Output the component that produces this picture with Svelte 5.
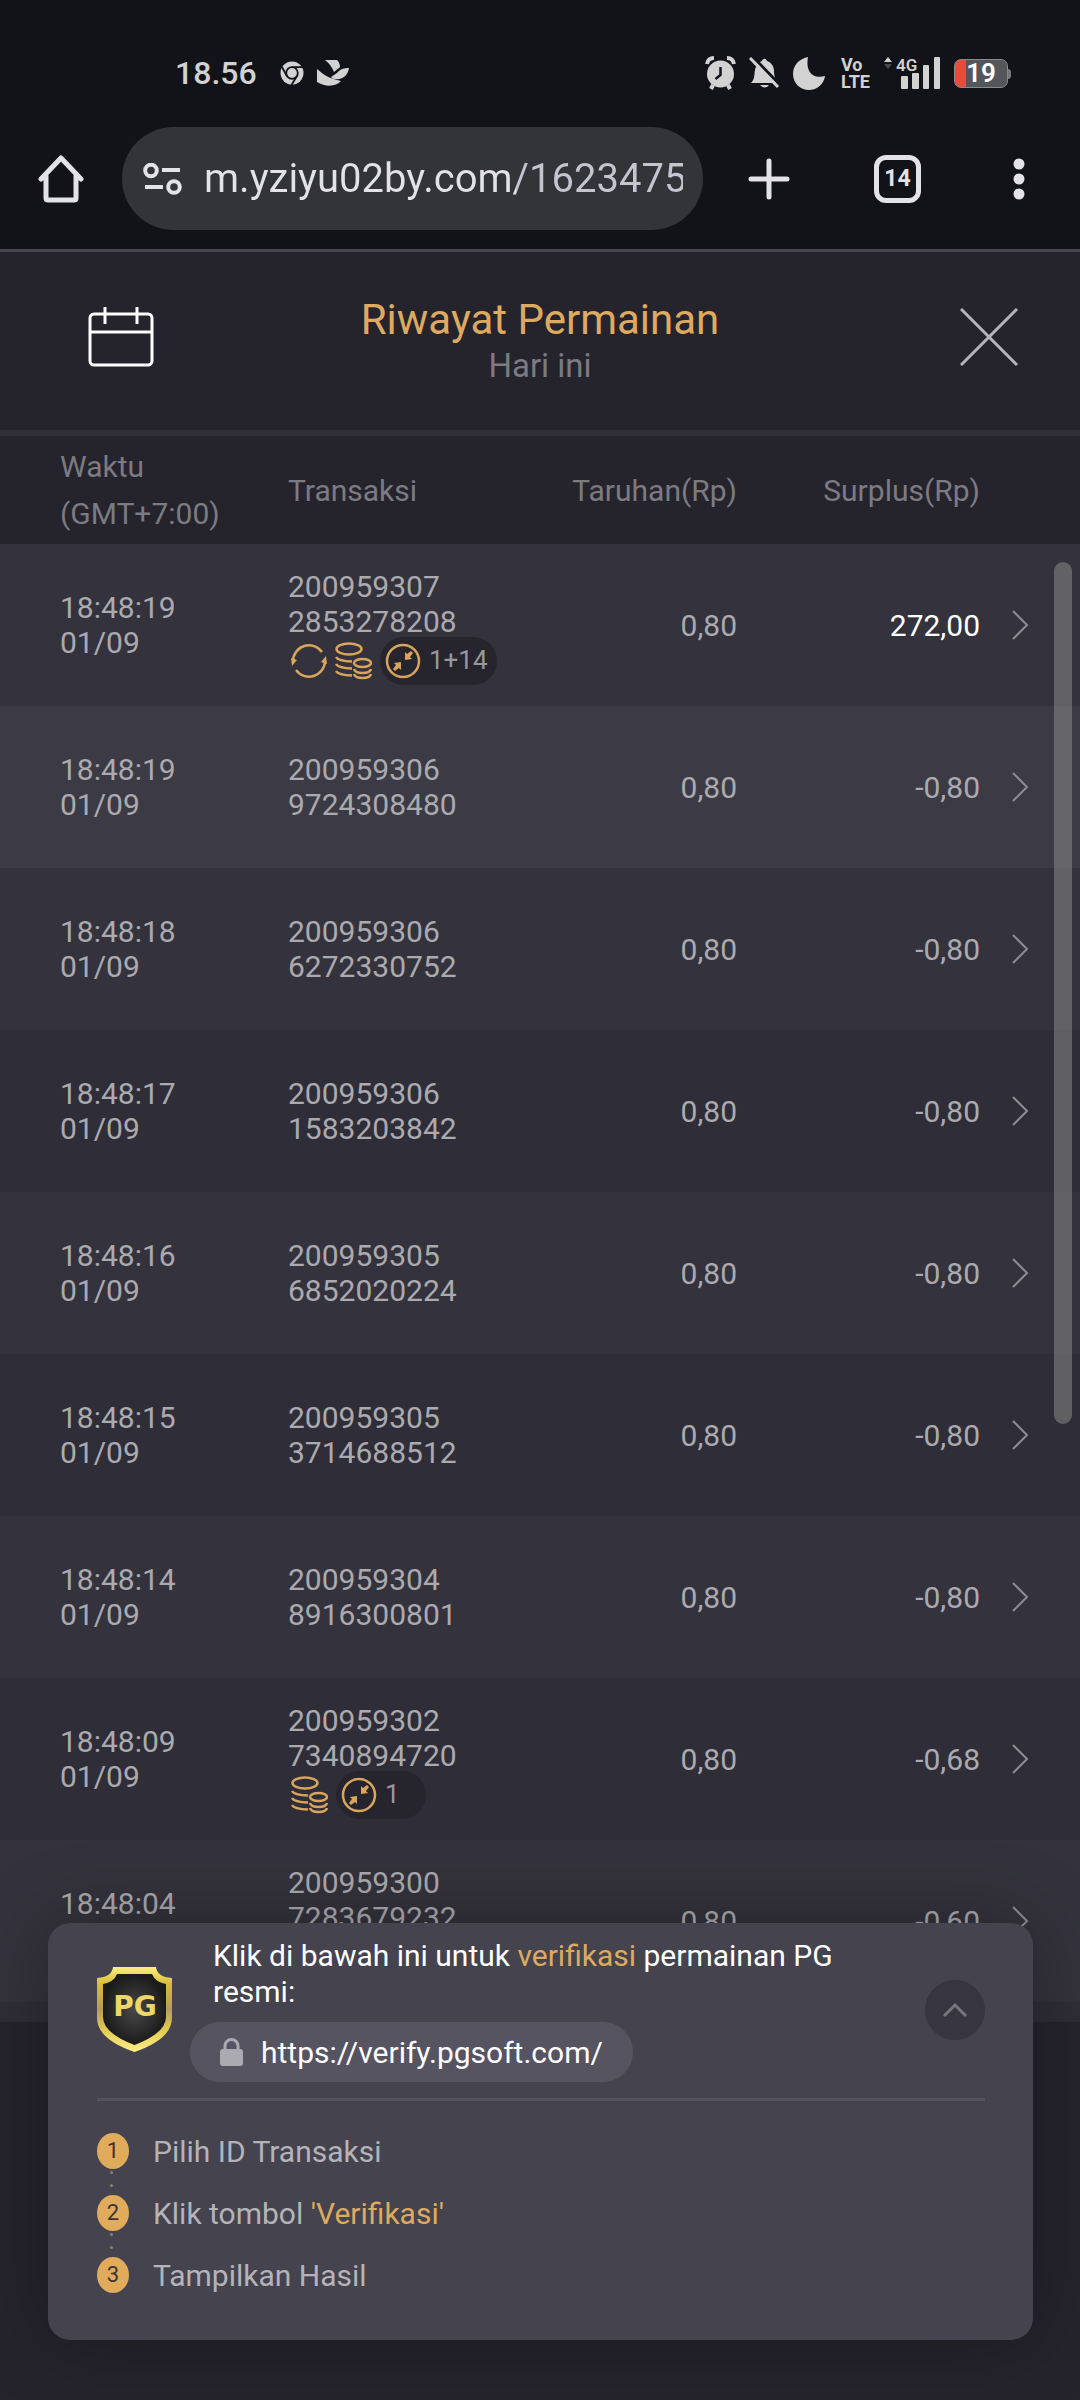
<script lang="ts">
  type Row = {
    time: string;
    date: string;
    id: [string, string];
    bet: string;
    profit: string;
    win?: boolean;
    respin?: boolean;
    coins?: boolean;
    rounds?: string;
  };

  const rows: Row[] = [
    { time: "18:48:19", date: "01/09", id: ["200959307", "2853278208"], bet: "0,80", profit: "272,00", win: true, respin: true, coins: true, rounds: "1+14" },
    { time: "18:48:19", date: "01/09", id: ["200959306", "9724308480"], bet: "0,80", profit: "-0,80" },
    { time: "18:48:18", date: "01/09", id: ["200959306", "6272330752"], bet: "0,80", profit: "-0,80" },
    { time: "18:48:17", date: "01/09", id: ["200959306", "1583203842"], bet: "0,80", profit: "-0,80" },
    { time: "18:48:16", date: "01/09", id: ["200959305", "6852020224"], bet: "0,80", profit: "-0,80" },
    { time: "18:48:15", date: "01/09", id: ["200959305", "3714688512"], bet: "0,80", profit: "-0,80" },
    { time: "18:48:14", date: "01/09", id: ["200959304", "8916300801"], bet: "0,80", profit: "-0,80" },
    { time: "18:48:09", date: "01/09", id: ["200959302", "7340894720"], bet: "0,80", profit: "-0,68", coins: true, rounds: "1" },
    { time: "18:48:04", date: "01/09", id: ["200959300", "7283679232"], bet: "0,80", profit: "-0,60", coins: true },
  ];

  let active = $state(1);
  let open = $state(true);
  let url = $state("m.yziyu02by.com/1623475");
</script>

<div class="screen">
  <div class="status">
    <span class="clock">18.56</span>
    <svg class="chrome" width="24" height="24" viewBox="0 0 24 24">
      <circle cx="12" cy="12" r="11.5" fill="#d2d2d2" />
      <circle cx="12" cy="12" r="5.8" fill="none" stroke="#121318" stroke-width="1.8" />
      <path d="M12 6.2H23M7 15 1.6 5.5M17 15l-5.5 9" stroke="#121318" stroke-width="1.8" />
    </svg>
    <svg width="32" height="26" viewBox="0 0 32 26" fill="#d2d2d2">
      <path d="M8 0h12c2 2 3 4 3 7l-6 5C15 7 12 3 8 0z" />
      <path d="M0 9c6 5 10 9 24 12-5 6-16 6-24 1z" />
      <path d="M32 8c-1 7-6 12-14 11-2 0-3-1-4-2l6-4c3-4 7-5 12-5z" />
    </svg>
    <div class="indicators">
      <svg width="31" height="34" viewBox="0 0 31 34">
        <circle cx="15.500" cy="18" r="13.500" fill="#d2d2d2" />
        <path d="M2 8Q3 2 9 2M29 8Q28 2 22 2M8 29l-2 4M23 29l2 4" fill="none" stroke="#d2d2d2" stroke-width="4" />
        <path d="M15.500 11v8l-5 4" fill="none" stroke="#121318" stroke-width="2.500" />
      </svg>
      <svg width="31" height="32" viewBox="0 0 31 32">
        <path d="M2 26c4-4 3-8 4-13 1-5 4-8 7-9 1-3 4-3 5 0 5 2 7 6 7 10 0 5 1 8 4 12zM11 28h9q-4 5-9 0z" fill="#d2d2d2" />
        <path d="M4 0l28 29" stroke="#121318" stroke-width="3" />
        <path d="M1 1l28 29" stroke="#d2d2d2" stroke-width="3" />
      </svg>
      <svg width="32" height="33" viewBox="0 0 32 33">
        <path d="M15 0C5 2 0 9 0 17c0 9 7 16 16 16 8 0 15-6 16-14C22 22 12 17 15 0z" fill="#d2d2d2" />
      </svg>
      <span class="volte">Vo<br />LTE</span>
      <svg class="signal" width="58" height="34" viewBox="0 0 58 34">
        <path d="M1 6l4-5 4 5z" fill="#d2d2d2" />
        <path d="M1 8l4 5 4-5z" fill="#48494d" />
        <text x="13" y="15">4G</text>
        <g fill="#d2d2d2">
          <rect x="18" y="20" width="7" height="13" rx="1" />
          <rect x="29" y="17" width="7" height="16" rx="1" />
          <rect x="40" y="9" width="6" height="24" rx="1" />
          <rect x="51" y="1" width="6" height="32" rx="1" />
        </g>
      </svg>
      <span class="battery">19</span>
    </div>
  </div>

  <nav class="toolbar">
    <button aria-label="Home">
      <svg width="46" height="48" viewBox="0 0 46 48" fill="none" stroke="#e3e2e9" stroke-width="5" stroke-linejoin="round" stroke-linecap="round">
        <path d="M3 24 23 3l20 21M8 21v22q0 2 2 2h26q2 0 2-2V21" />
      </svg>
    </button>
    <div class="address">
      <svg width="39" height="32" viewBox="0 0 39 32" fill="none" stroke="#e3e2e9" stroke-width="4">
        <circle cx="8" cy="7.500" r="5.800" />
        <path d="M19 7h18M2 24h18" />
        <circle cx="31" cy="24" r="5.800" />
      </svg>
      <input type="text" aria-label="Address" bind:value={url} />
    </div>
    <button class="new-tab" aria-label="New tab">
      <svg width="42" height="42" viewBox="0 0 42 42" stroke="#e3e2e9" stroke-width="5" stroke-linecap="round">
        <path d="M21 3v36M3 21h36" />
      </svg>
    </button>
    <button class="tabs" aria-label="Tabs">14</button>
    <button class="more" aria-label="Menu">
      <svg width="12" height="42" viewBox="0 0 12 42" fill="#e3e2e9">
        <circle cx="6" cy="6" r="5.500" />
        <circle cx="6" cy="21" r="5.500" />
        <circle cx="6" cy="36" r="5.500" />
      </svg>
    </button>
  </nav>

  <header>
    <button aria-label="Kalender">
      <svg width="66" height="60" viewBox="0 0 66 60" fill="none" stroke="#fff" stroke-width="3">
        <rect x="2" y="7" width="62" height="51" rx="4" />
        <path d="M2 25h62M17 0v17M49 0v17" />
      </svg>
    </button>
    <div>
      <h1>Riwayat Permainan</h1>
      <p>Hari ini</p>
    </div>
    <button class="close" aria-label="Tutup">
      <svg width="58" height="58" viewBox="0 0 58 58" stroke="#b5b5b9" stroke-width="3">
        <path d="M1 1l56 56M57 1 1 57" />
      </svg>
    </button>
  </header>

  <main>
    <table>
      <thead>
        <tr>
          <th class="when">Waktu<br />(GMT+7:00)</th>
          <th class="trans">Transaksi</th>
          <th class="num bet">Taruhan(Rp)</th>
          <th class="num">Surplus(Rp)</th>
          <th class="go" aria-label="Detail"></th>
        </tr>
      </thead>
      <tbody>
        {#each rows as row, i}
          <tr class:active={i === active} onclick={() => (active = i)}>
            <td class="when">{row.time}<br />{row.date}</td>
            <td class="trans">
              {row.id[0]}<br />{row.id[1]}
              {#if row.coins}
                <div class="tags">
                  {#if row.respin}
                    <svg width="36" height="36" viewBox="0 0 36 36" fill="none" stroke="#d9a55c" stroke-width="2.500">
                      <path d="M2 18A16 16 0 0 1 31 9M34 18A16 16 0 0 1 5 27" />
                      <path d="M0 15l6 2-5 6zM36 21l-6-2 5-6z" fill="#d9a55c" stroke="none" />
                    </svg>
                  {/if}
                  <svg width="37" height="38" viewBox="0 0 37 38" fill="none" stroke="#d9a55c" stroke-width="2.500">
                    <ellipse cx="14" cy="7" rx="12.500" ry="5.500" />
                    <path d="M1 15q2 4 16 4.500M1 22q2 4 16 4.500M1 29q2 4 16 4.500" />
                    <ellipse cx="27.500" cy="21" rx="8.500" ry="4" />
                    <path d="M19 27q1 4 8.500 4t8.500-4M19 32q1 4 8.500 4t8.500-4" />
                  </svg>
                  {#if row.rounds}
                    <span class="pill">
                      <svg width="36" height="36" viewBox="0 0 36 36">
                        <circle cx="18" cy="18" r="16" fill="none" stroke="#d9a55c" stroke-width="2.500" />
                        <path d="M20 17v-8l2 2 4-3 2 2-3 4 2 2zM16 19v8l-2-2-4 3-2-2 3-4-2-2z" fill="#d9a55c" />
                      </svg>
                      {row.rounds}
                    </span>
                  {/if}
                </div>
              {/if}
            </td>
            <td class="num bet">{row.bet}</td>
            <td class="num" class:win={row.win}>{row.profit}</td>
            <td class="go">
              <svg width="17" height="30" viewBox="0 0 17 30" fill="none" stroke="#8c8b92" stroke-width="2">
                <path d="M1 1l14 14L1 29" />
              </svg>
            </td>
          </tr>
        {/each}
      </tbody>
    </table>
    <div class="scrollbar"></div>
  </main>

  <section class="verify">
    <div class="intro">
      <svg class="shield" width="75" height="86" viewBox="0 0 75 86">
        <defs>
          <linearGradient id="gold" x1="0" y1="0" x2="0" y2="1">
            <stop offset="0" stop-color="#fbf07e" />
            <stop offset="0.2" stop-color="#d8bb3c" />
            <stop offset="0.5" stop-color="#b79c5c" />
            <stop offset="0.75" stop-color="#e2cd52" />
            <stop offset="1" stop-color="#fdf08a" />
          </linearGradient>
          <radialGradient id="face">
            <stop offset="0" stop-color="#484848" />
            <stop offset="1" stop-color="#1b1b1b" />
          </radialGradient>
        </defs>
        <path d="M16 0h43q1 10 16 11v40q0 21-37.500 34Q0 72 0 51V11Q15 10 16 0z" fill="url(#gold)" />
        <path d="M20 7h35q3 8 14 10v33q0 16-31.500 28Q6 66 6 50V17Q17 15 20 7z" fill="url(#face)" />
        <text x="38" y="49" text-anchor="middle">PG</text>
      </svg>
      <div class="copy">
        <p>Klik di bawah ini untuk <em>verifikasi</em> permainan PG resmi:</p>
        <a href="https://verify.pgsoft.com/">
          <svg width="23" height="28" viewBox="0 0 23 28">
            <path d="M5 13V8a6.500 6.500 0 0 1 13 0v5" fill="none" stroke="#abaab1" stroke-width="3" />
            <rect y="11" width="23" height="17" rx="3" fill="#abaab1" />
          </svg>
          https://verify.pgsoft.com/
        </a>
      </div>
      <button class="toggle" aria-label="Ciutkan" onclick={() => (open = !open)}>
        <svg width="26" height="16" viewBox="0 0 26 16" fill="none" stroke="#77767e" stroke-width="3">
          <path d="M2 14 13 3l11 11" />
        </svg>
      </button>
    </div>
    {#if open}
      <ol>
        <li><b>1</b><span>Pilih ID Transaksi</span></li>
        <li><b>2</b><span>Klik tombol <em>'Verifikasi'</em></span></li>
        <li><b>3</b><span>Tampilkan Hasil</span></li>
      </ol>
    {/if}
  </section>
</div>

<style>
  :global(body) {
    background: #25242d;
  }
  .screen {
    position: relative;
    display: flex;
    flex-direction: column;
    height: 100vh;
    box-sizing: border-box;
    padding-bottom: 378px;
    overflow: hidden;
    background: #25242d;
    color: #abaaaf;
    font: 30px/35px Roboto, sans-serif;
  }
  svg {
    display: block;
    flex: none;
  }
  button {
    flex: none;
    padding: 0;
    border: none;
    background: none;
    color: inherit;
    font: inherit;
  }
  p,
  h1,
  ol {
    margin: 0;
    padding: 0;
  }
  em {
    color: #deaa60;
    font-style: normal;
  }

  .status {
    display: flex;
    align-items: center;
    height: 34px;
    padding: 56px 72px 0 175px;
    background: #121318;
    color: #d2d2d2;
  }
  .clock {
    font-size: 32px;
    font-weight: 500;
  }
  .chrome {
    margin: 0 13px 0 23px;
  }
  .indicators {
    display: flex;
    align-items: center;
    gap: 13px;
    margin-left: auto;
  }
  .volte {
    margin-left: 3px;
    font-size: 18px;
    font-weight: 700;
    line-height: 17px;
  }
  .signal text {
    fill: #d2d2d2;
    font-size: 17px;
    font-weight: 600;
  }
  .battery {
    position: relative;
    width: 52px;
    border: 1px solid #8a8a8d;
    border-radius: 7px;
    background: linear-gradient(90deg, #ea4a3d 11px, #55565a 11px);
    color: #fff;
    font-size: 26px;
    font-weight: 600;
    line-height: 27px;
    text-align: center;
  }
  .battery::after {
    content: "";
    position: absolute;
    top: 9px;
    right: -4px;
    width: 3px;
    height: 10px;
    border-radius: 0 3px 3px 0;
    background: #77787b;
  }

  .toolbar {
    display: flex;
    align-items: center;
    padding: 37px 55px 19px 38px;
    border-bottom: 3px solid #47464f;
    background: #121318;
  }
  .address {
    flex: 1;
    min-width: 0;
    display: flex;
    align-items: center;
    gap: 22px;
    height: 103px;
    margin: 0 45px 0 38px;
    padding: 0 20px 0 21px;
    border-radius: 52px;
    background: #333438;
  }
  input {
    flex: 1;
    min-width: 0;
    height: 60px;
    padding: 0;
    border: none;
    outline: none;
    background: linear-gradient(90deg, #e3e2e9 312px, #c5c4d0 312px);
    background-clip: text;
    -webkit-background-clip: text;
    -webkit-text-fill-color: transparent;
    font: 40px/60px Roboto, sans-serif;
  }
  .tabs {
    width: 47px;
    height: 48px;
    margin: 0 92px 0 84px;
    border: 5px solid #e3e2e9;
    border-radius: 12px;
    color: #e3e2e9;
    font-size: 23px;
    font-weight: 700;
    line-height: 38px;
  }

  header {
    display: grid;
    grid-template-columns: 1fr auto 1fr;
    align-items: center;
    height: 178px;
    padding: 0 62px;
    border-bottom: 6px solid #302f3a;
    text-align: center;
  }
  header button {
    justify-self: start;
    padding: 0 0 8px 26px;
  }
  header .close {
    justify-self: end;
  }
  h1 {
    color: #deaa60;
    font-size: 42px;
    font-weight: 400;
    line-height: 50px;
  }
  header p {
    color: #7c7b82;
    font-size: 33px;
    line-height: 42px;
  }

  main {
    position: relative;
    flex: 1;
    min-height: 0;
    overflow: hidden;
    background: #2f2e38;
  }
  table {
    width: 100%;
    border-collapse: collapse;
    table-layout: fixed;
  }
  th {
    height: 108px;
    padding: 0;
    background: #25242d;
    color: #7c7b82;
    font-weight: 400;
    line-height: 47px;
    text-align: left;
  }
  td {
    height: 162px;
    padding: 0;
  }
  tbody tr:nth-child(odd) {
    background: #34333d;
  }
  tbody tr.active {
    background: #3c3b45;
  }
  .when {
    width: 228px;
    padding-left: 60px;
  }
  .trans {
    width: 262px;
  }
  .num {
    width: 243px;
    text-align: right;
  }
  .bet {
    width: 187px;
  }
  .win {
    color: #fff;
  }
  .go svg {
    margin-left: 32px;
  }
  .tags {
    display: flex;
    align-items: center;
    gap: 8px;
    height: 48px;
    margin: -2px 0 -3px;
    padding-left: 3px;
  }
  .pill {
    display: flex;
    align-items: center;
    gap: 8px;
    box-sizing: border-box;
    min-width: 90px;
    height: 48px;
    padding: 0 9px 0 5px;
    border-radius: 24px;
    background: #26252d;
    color: #98979d;
    font-size: 26px;
  }
  .scrollbar {
    position: absolute;
    top: 126px;
    right: 8px;
    width: 18px;
    height: 862px;
    border-radius: 9px;
    background: rgba(136, 136, 132, 0.56);
  }

  .verify {
    position: absolute;
    right: 47px;
    bottom: 60px;
    left: 48px;
    padding: 0 48px 0 49px;
    border-radius: 22px;
    background: #44434e;
    box-shadow: 0 0 80px rgba(0, 0, 0, 0.3);
    color: #b4b3b9;
  }
  .intro {
    display: flex;
    align-items: center;
    gap: 18px;
    padding: 15px 0 16px;
    border-bottom: 3px solid #54535e;
  }
  .shield text {
    fill: #ecd768;
    font: 700 28px "DejaVu Sans", sans-serif;
  }
  .copy {
    flex: 1;
  }
  .copy p {
    padding-left: 23px;
    margin-bottom: 12px;
    color: #fff;
    line-height: 36px;
  }
  .copy a {
    display: inline-flex;
    align-items: center;
    gap: 18px;
    height: 60px;
    padding: 0 30px;
    border-radius: 30px;
    background: #555460;
    color: #fff;
    text-decoration: none;
    vertical-align: top;
  }
  .toggle {
    display: grid;
    place-items: center;
    width: 60px;
    height: 60px;
    border-radius: 50%;
    background: #363540;
  }
  ol {
    display: flex;
    flex-direction: column;
    gap: 26px;
    padding: 32px 0 47px;
    list-style: none;
  }
  li {
    display: flex;
    align-items: center;
    gap: 24px;
  }
  b {
    position: relative;
    width: 32px;
    border-radius: 50%;
    background: #e0ab5b;
    color: #3a3434;
    font-size: 22px;
    font-weight: 400;
    line-height: 36px;
    text-align: center;
  }
  li:not(:last-child) b::after {
    content: "";
    position: absolute;
    top: 38px;
    left: 13px;
    width: 3px;
    height: 3px;
    border-radius: 50%;
    background: #96805f;
    box-shadow: 0 13px #96805f;
  }
</style>
